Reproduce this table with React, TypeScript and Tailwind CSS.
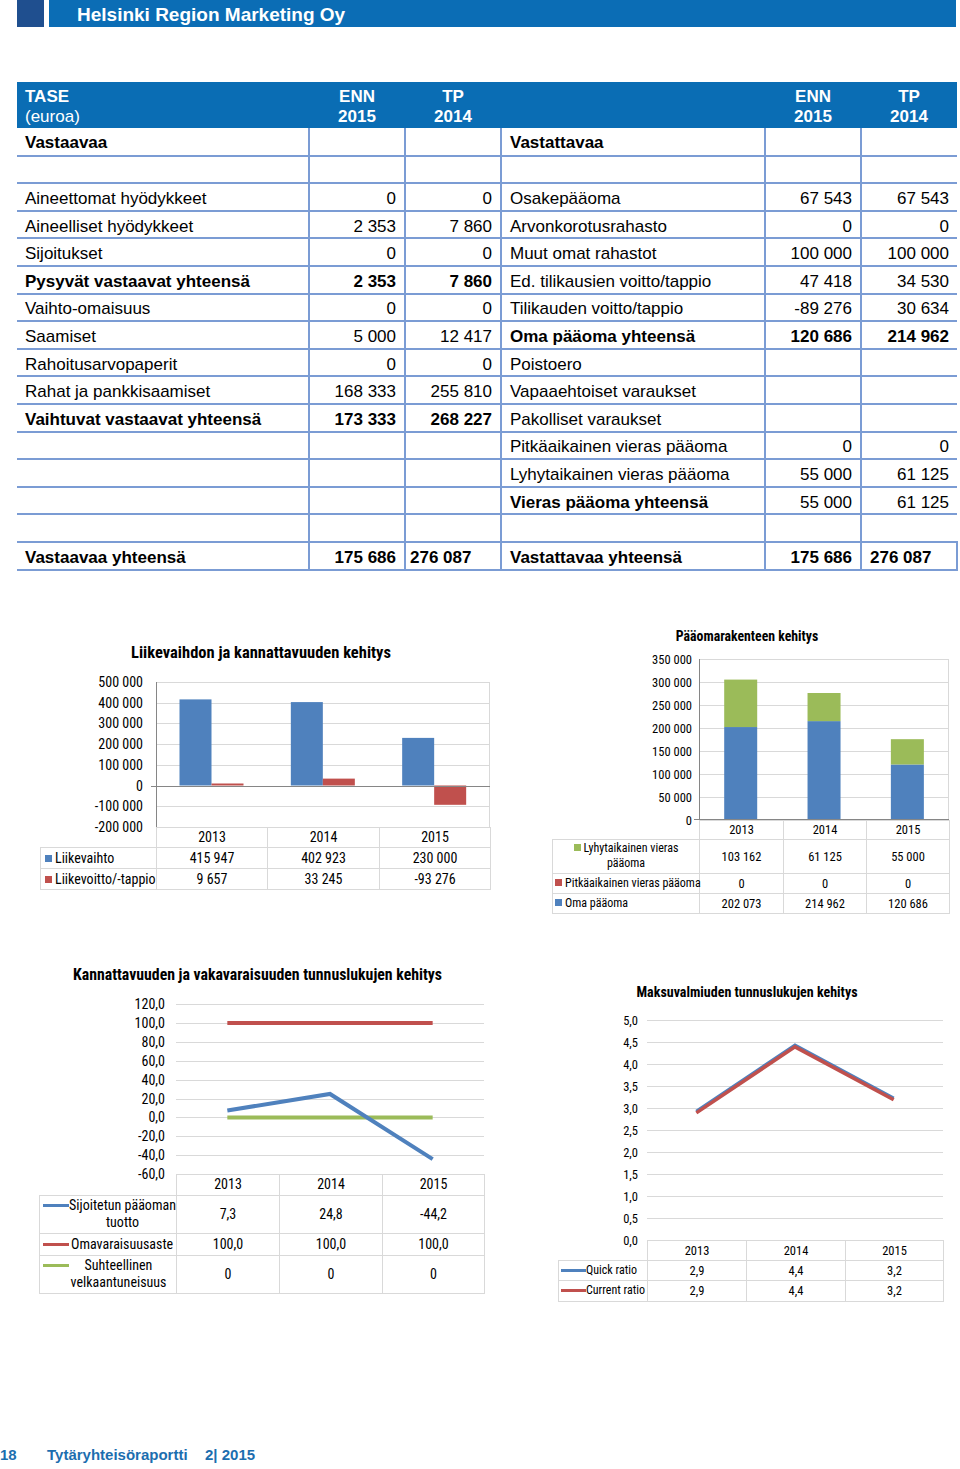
import React from 'react'

const NARROW = "font-['Roboto_Condensed','Noto_Sans',sans-serif] [font-stretch:condensed]"
const BLUE = '#4f81bd'
const RED = '#c0504d'
const GREEN = '#9bbb59'
const GRID = '#d9d9d9'
const AXIS = '#868686'

type TaseRow = {
    l?: string
    l1?: string
    l2?: string
    lb?: boolean
    r?: string
    r1?: string
    r2?: string
    rb?: boolean
    rnb?: boolean
}

const taseRows: TaseRow[] = [
    { l: 'Aineettomat hyödykkeet', l1: '0', l2: '0', r: 'Osakepääoma', r1: '67 543', r2: '67 543' },
    { l: 'Aineelliset hyödykkeet', l1: '2 353', l2: '7 860', r: 'Arvonkorotusrahasto', r1: '0', r2: '0' },
    { l: 'Sijoitukset', l1: '0', l2: '0', r: 'Muut omat rahastot', r1: '100 000', r2: '100 000' },
    { l: 'Pysyvät vastaavat yhteensä', l1: '2 353', l2: '7 860', lb: true, r: 'Ed. tilikausien voitto/tappio', r1: '47 418', r2: '34 530' },
    { l: 'Vaihto-omaisuus', l1: '0', l2: '0', r: 'Tilikauden voitto/tappio', r1: '-89 276', r2: '30 634' },
    { l: 'Saamiset', l1: '5 000', l2: '12 417', r: 'Oma pääoma yhteensä', r1: '120 686', r2: '214 962', rb: true, rnb: true },
    { l: 'Rahoitusarvopaperit', l1: '0', l2: '0', r: 'Poistoero' },
    { l: 'Rahat ja pankkisaamiset', l1: '168 333', l2: '255 810', r: 'Vapaaehtoiset varaukset' },
    { l: 'Vaihtuvat vastaavat yhteensä', l1: '173 333', l2: '268 227', lb: true, r: 'Pakolliset varaukset' },
    { r: 'Pitkäaikainen vieras pääoma', r1: '0', r2: '0' },
    { r: 'Lyhytaikainen vieras pääoma', r1: '55 000', r2: '61 125' },
    { r: 'Vieras pääoma yhteensä', r1: '55 000', r2: '61 125', rb: true },
    {},
]

const td = 'h-[27.6px] border-b-2 border-[#7b9cd4] px-2 pt-[4px] pb-0 align-middle'
const tdl = 'h-[27.6px] border-b-2 border-l-2 border-[#7b9cd4] px-2 pt-[4px] pb-0 align-middle'

function Tase() {
    return (
        <table className="ml-[17px] mt-[55px] w-[940px] table-fixed border-collapse font-['Liberation_Sans',Arial,sans-serif] text-[17px] leading-[20px] text-black">
            <colgroup>
                <col className="w-[292px]" />
                <col className="w-[96px]" />
                <col className="w-[96px]" />
                <col className="w-[264px]" />
                <col className="w-[96px]" />
                <col className="w-[96px]" />
            </colgroup>
            <thead>
                <tr className="h-[46px] bg-[#0a6db4] text-white">
                    <th className="px-2 pt-[4px] text-left font-normal">
                        <div className="font-bold">TASE</div>
                        <div>(euroa)</div>
                    </th>
                    <th className="pt-[4px] text-center font-bold">ENN<br />2015</th>
                    <th className="pt-[4px] text-center font-bold">TP<br />2014</th>
                    <th />
                    <th className="pt-[4px] text-center font-bold">ENN<br />2015</th>
                    <th className="pt-[4px] text-center font-bold">TP<br />2014</th>
                </tr>
            </thead>
            <tbody>
                <tr>
                    <td className={`${td} font-bold`}>Vastaavaa</td>
                    <td className={tdl} />
                    <td className={tdl} />
                    <td className={`${tdl} font-bold`}>Vastattavaa</td>
                    <td className={tdl} />
                    <td className={tdl} />
                </tr>
                <tr>
                    <td className={td} />
                    <td className={tdl} />
                    <td className={tdl} />
                    <td className={tdl} />
                    <td className={tdl} />
                    <td className={tdl} />
                </tr>
                {taseRows.map((row, i) => (
                    <tr key={i}>
                        <td className={`${td} whitespace-nowrap ${row.lb ? 'font-bold' : ''}`}>{row.l}</td>
                        <td className={`${tdl} text-right ${row.lb ? 'font-bold' : ''}`}>{row.l1}</td>
                        <td className={`${tdl} text-right ${row.lb ? 'font-bold' : ''}`}>{row.l2}</td>
                        <td className={`${tdl} whitespace-nowrap ${row.rb ? 'font-bold' : ''}`}>{row.r}</td>
                        <td className={`${tdl} text-right ${row.rnb ? 'font-bold' : ''}`}>{row.r1}</td>
                        <td className={`${tdl} text-right ${row.rnb ? 'font-bold' : ''}`}>{row.r2}</td>
                    </tr>
                ))}
                <tr className="font-bold">
                    <td className={td}>Vastaavaa yhteensä</td>
                    <td className={`${tdl} text-right`}>175 686</td>
                    <td className="h-[27.6px] border-b-2 border-l-2 border-[#7b9cd4] pt-[4px] pb-0 pl-1">276 087</td>
                    <td className={tdl}>Vastattavaa yhteensä</td>
                    <td className={`${tdl} text-right`}>175 686</td>
                    <td className="h-[27.6px] border-x-2 border-b-2 border-[#7b9cd4] pt-[4px] pb-0 pl-2">276 087</td>
                </tr>
            </tbody>
        </table>
    )
}

const cell = 'border border-[#d9d9d9] text-center align-middle p-0'

function Square({ color }: { color: string }) {
    return <span className="mr-[3px] inline-block h-[7px] w-[7px] align-[1px]" style={{ backgroundColor: color }} />
}

function LineMark({ color, w }: { color: string; w: string }) {
    return <span className={`inline-block h-[3px] ${w} shrink-0`} style={{ backgroundColor: color }} />
}

function Chart1() {
    const ticks = [500000, 400000, 300000, 200000, 100000, 0, -100000, -200000]
    const y = (v: number) => 11 + ((500000 - v) * 20.7) / 100000
    const data = [
        [415947, 9657],
        [402923, 33245],
        [230000, -93276],
    ]
    const fmt = (v: number) => (v < 0 ? '-' : '') + Math.abs(v).toLocaleString('en-US').replace(/,/g, ' ')
    return (
        <div className={`ml-[40px] mt-[17px] w-[450px] ${NARROW} text-black`}>
            <div className="h-[18px] whitespace-nowrap pr-[8px] text-center text-[16.5px] font-bold leading-[18px]">
                Liikevaihdon ja kannattavuuden kehitys
            </div>
            <svg width={450} height={156} className="mt-[9px] block overflow-visible">
                {ticks.map((t) => (
                    <line key={t} x1={116} x2={450} y1={Math.round(y(t)) + 0.5} y2={Math.round(y(t)) + 0.5} stroke={GRID} />
                ))}
                <line x1={449.5} x2={449.5} y1={11} y2={156} stroke={GRID} />
                {data.map((d, i) => {
                    const gx = 116 + (334 / 3) * i + 23.5
                    const z = y(0)
                    return (
                        <g key={i}>
                            <rect x={gx} width={32} y={y(d[0])} height={z - y(d[0])} fill={BLUE} />
                            <rect x={gx + 32} width={32} y={Math.min(y(d[1]), z)} height={Math.abs(z - y(d[1]))} fill={RED} />
                        </g>
                    )
                })}
                <line x1={116.5} x2={116.5} y1={11} y2={156} stroke={AXIS} />
                <line x1={111} x2={450} y1={Math.round(y(0)) + 0.5} y2={Math.round(y(0)) + 0.5} stroke={AXIS} />
                {ticks.map((t) => (
                    <text key={t} x={103} y={y(t)} textAnchor="end" dominantBaseline="central" fontSize={14}>
                        {fmt(t)}
                    </text>
                ))}
            </svg>
            <table className="w-[450px] table-fixed border-collapse text-[14px] leading-[16px]">
                <colgroup>
                    <col className="w-[116px]" />
                    <col className="w-[111px]" />
                    <col className="w-[112px]" />
                    <col className="w-[111px]" />
                </colgroup>
                <tbody>
                    <tr className="h-[20px]">
                        <td />
                        <td className={cell}>2013</td>
                        <td className={cell}>2014</td>
                        <td className={cell}>2015</td>
                    </tr>
                    <tr className="h-[21px]">
                        <td className={`${cell} whitespace-nowrap pl-[4px] text-left`}>
                            <Square color={BLUE} />Liikevaihto
                        </td>
                        <td className={cell}>415 947</td>
                        <td className={cell}>402 923</td>
                        <td className={cell}>230 000</td>
                    </tr>
                    <tr className="h-[21px]">
                        <td className={`${cell} whitespace-nowrap pl-[4px] text-left`}>
                            <Square color={RED} />Liikevoitto/-tappio
                        </td>
                        <td className={cell}>9 657</td>
                        <td className={cell}>33 245</td>
                        <td className={cell}>-93 276</td>
                    </tr>
                </tbody>
            </table>
        </div>
    )
}

function Chart2() {
    const ticks = [350000, 300000, 250000, 200000, 150000, 100000, 50000, 0]
    const y = (v: number) => 10 + ((350000 - v) * 161) / 350000
    const data = [
        [202073, 103162],
        [214962, 61125],
        [120686, 55000],
    ]
    const fmt = (v: number) => v.toLocaleString('en-US').replace(/,/g, ' ')
    return (
        <div className={`ml-[62px] w-[397px] ${NARROW} text-black`}>
            <div className="h-[18px] pr-[7px] text-center text-[13.8px] font-bold leading-[18px]">Pääomarakenteen kehitys</div>
            <svg width={397} height={171} className="mt-[4px] block overflow-visible">
                {ticks.map((t) => (
                    <line key={t} x1={147} x2={397} y1={Math.round(y(t)) + 0.5} y2={Math.round(y(t)) + 0.5} stroke={GRID} />
                ))}
                <line x1={396.5} x2={396.5} y1={10} y2={171} stroke={GRID} />
                {data.map((d, i) => {
                    const gx = 147 + (250 / 3) * i + 25.2
                    return (
                        <g key={i}>
                            <rect x={gx} width={33} y={y(d[0])} height={171 - y(d[0])} fill={BLUE} />
                            <rect x={gx} width={33} y={y(d[0] + d[1])} height={y(d[0]) - y(d[0] + d[1])} fill={GREEN} />
                        </g>
                    )
                })}
                <line x1={147.5} x2={147.5} y1={10} y2={171} stroke={AXIS} />
                <line x1={142} x2={397} y1={170.5} y2={170.5} stroke={AXIS} />
                {ticks.map((t) => (
                    <text key={t} x={140} y={y(t)} textAnchor="end" dominantBaseline="central" fontSize={12.5}>
                        {fmt(t)}
                    </text>
                ))}
            </svg>
            <table className="w-[397px] table-fixed border-collapse text-[12.5px] leading-[15px]">
                <colgroup>
                    <col className="w-[147px]" />
                    <col className="w-[84px]" />
                    <col className="w-[83px]" />
                    <col className="w-[83px]" />
                </colgroup>
                <tbody>
                    <tr className="h-[19px]">
                        <td />
                        <td className={cell}>2013</td>
                        <td className={cell}>2014</td>
                        <td className={cell}>2015</td>
                    </tr>
                    <tr className="h-[34px]">
                        <td className={`${cell} px-[2px] text-[12px]`}>
                            <Square color={GREEN} />Lyhytaikainen vieras
                            <br />
                            pääoma
                        </td>
                        <td className={cell}>103 162</td>
                        <td className={cell}>61 125</td>
                        <td className={cell}>55 000</td>
                    </tr>
                    <tr className="h-[20px]">
                        <td className={`${cell} whitespace-nowrap pl-[2px] text-left text-[12px]`}>
                            <Square color={RED} />Pitkäaikainen vieras pääoma
                        </td>
                        <td className={cell}>0</td>
                        <td className={cell}>0</td>
                        <td className={cell}>0</td>
                    </tr>
                    <tr className="h-[20px]">
                        <td className={`${cell} whitespace-nowrap pl-[2px] text-left text-[12px]`}>
                            <Square color={BLUE} />Oma pääoma
                        </td>
                        <td className={cell}>202 073</td>
                        <td className={cell}>214 962</td>
                        <td className={cell}>120 686</td>
                    </tr>
                </tbody>
            </table>
        </div>
    )
}

function Chart3() {
    const ticks = [120, 100, 80, 60, 40, 20, 0, -20, -40, -60]
    const y = (v: number) => 12 + (120 - v) * 0.945
    const xs = [0, 1, 2].map((i) => 137 + (308 / 3) * (i + 0.5))
    const series = [
        { color: RED, vals: [100, 100, 100] },
        { color: GREEN, vals: [0, 0, 0] },
        { color: BLUE, vals: [7.3, 24.8, -44.2] },
    ]
    return (
        <div className={`ml-[39px] w-[445px] ${NARROW} text-black`}>
            <div className="h-[18px] whitespace-nowrap pr-[8px] text-center text-[15.8px] font-bold leading-[18px]">
                Kannattavuuden ja vakavaraisuuden tunnuslukujen kehitys
            </div>
            <svg width={445} height={182} className="mt-[8px] block overflow-visible">
                {ticks.map((t) => (
                    <line key={t} x1={137} x2={445} y1={Math.round(y(t)) + 0.5} y2={Math.round(y(t)) + 0.5} stroke={GRID} />
                ))}
                {series.map((s) => (
                    <polyline
                        key={s.color}
                        points={s.vals.map((v, i) => `${xs[i]},${y(v)}`).join(' ')}
                        fill="none"
                        stroke={s.color}
                        strokeWidth={4}
                    />
                ))}
                {ticks.map((t) => (
                    <text key={t} x={126} y={y(t)} textAnchor="end" dominantBaseline="central" fontSize={14}>
                        {t.toFixed(1).replace('.', ',')}
                    </text>
                ))}
            </svg>
            <table className="w-[445px] table-fixed border-collapse text-[14px] leading-[17px]">
                <colgroup>
                    <col className="w-[137px]" />
                    <col className="w-[103px]" />
                    <col className="w-[103px]" />
                    <col className="w-[102px]" />
                </colgroup>
                <tbody>
                    <tr className="h-[21px]">
                        <td />
                        <td className={cell}>2013</td>
                        <td className={cell}>2014</td>
                        <td className={cell}>2015</td>
                    </tr>
                    <tr className="h-[38px]">
                        <td className={`${cell} pl-[3px]`}>
                            <div className="flex items-start">
                                <LineMark color={BLUE} w="w-[26px] mt-[7px]" />
                                <div className="flex-1 text-center">Sijoitetun pääoman<br />tuotto</div>
                            </div>
                        </td>
                        <td className={cell}>7,3</td>
                        <td className={cell}>24,8</td>
                        <td className={cell}>-44,2</td>
                    </tr>
                    <tr className="h-[22px]">
                        <td className={`${cell} pl-[3px]`}>
                            <div className="flex items-center whitespace-nowrap">
                                <LineMark color={RED} w="w-[26px]" />
                                <span className="pl-[2px]">Omavaraisuusaste</span>
                            </div>
                        </td>
                        <td className={cell}>100,0</td>
                        <td className={cell}>100,0</td>
                        <td className={cell}>100,0</td>
                    </tr>
                    <tr className="h-[38px]">
                        <td className={`${cell} pl-[3px]`}>
                            <div className="flex items-start">
                                <LineMark color={GREEN} w="w-[26px] mt-[7px]" />
                                <div className="flex-1 pr-[8px] text-center">Suhteellinen<br />velkaantuneisuus</div>
                            </div>
                        </td>
                        <td className={cell}>0</td>
                        <td className={cell}>0</td>
                        <td className={cell}>0</td>
                    </tr>
                </tbody>
            </table>
        </div>
    )
}

function Chart4() {
    const ticks = [5, 4.5, 4, 3.5, 3, 2.5, 2, 1.5, 1, 0.5, 0]
    const y = (v: number) => 11 + (5 - v) * 44
    const xs = [0, 1, 2].map((i) => 89 + (296 / 3) * (i + 0.5))
    const vals = [2.9, 4.4, 3.2]
    return (
        <div className={`ml-[74px] mt-[17px] w-[385px] ${NARROW} text-black`}>
            <div className="h-[18px] whitespace-nowrap pr-[7px] text-center text-[14px] font-bold leading-[18px]">
                Maksuvalmiuden tunnuslukujen kehitys
            </div>
            <svg width={385} height={231} className="mt-[8px] block overflow-visible">
                {ticks.map((t) => (
                    <line key={t} x1={89} x2={385} y1={Math.round(y(t)) + 0.5} y2={Math.round(y(t)) + 0.5} stroke={GRID} />
                ))}
                <polyline points={vals.map((v, i) => `${xs[i]},${y(v) - 1}`).join(' ')} fill="none" stroke={BLUE} strokeWidth={3.5} />
                <polyline points={vals.map((v, i) => `${xs[i]},${y(v) + 0.5}`).join(' ')} fill="none" stroke={RED} strokeWidth={3.5} />
                {ticks.map((t) => (
                    <text key={t} x={80} y={y(t)} textAnchor="end" dominantBaseline="central" fontSize={12.5}>
                        {t.toFixed(1).replace('.', ',')}
                    </text>
                ))}
            </svg>
            <table className="w-[385px] table-fixed border-collapse text-[12.5px] leading-[15px]">
                <colgroup>
                    <col className="w-[89px]" />
                    <col className="w-[99px]" />
                    <col className="w-[99px]" />
                    <col className="w-[98px]" />
                </colgroup>
                <tbody>
                    <tr className="h-[20px]">
                        <td />
                        <td className={cell}>2013</td>
                        <td className={cell}>2014</td>
                        <td className={cell}>2015</td>
                    </tr>
                    <tr className="h-[20px]">
                        <td className={`${cell} pl-[2px] text-[12px]`}>
                            <div className="flex items-center whitespace-nowrap">
                                <LineMark color={BLUE} w="w-[25px]" />
                                <span>Quick ratio</span>
                            </div>
                        </td>
                        <td className={cell}>2,9</td>
                        <td className={cell}>4,4</td>
                        <td className={cell}>3,2</td>
                    </tr>
                    <tr className="h-[21px]">
                        <td className={`${cell} pl-[2px] text-[12px]`}>
                            <div className="flex items-center whitespace-nowrap">
                                <LineMark color={RED} w="w-[25px]" />
                                <span>Current ratio</span>
                            </div>
                        </td>
                        <td className={cell}>2,9</td>
                        <td className={cell}>4,4</td>
                        <td className={cell}>3,2</td>
                    </tr>
                </tbody>
            </table>
        </div>
    )
}

export default function App() {
    return (
        <div className="flex h-[1469px] w-[960px] flex-col bg-white font-['Liberation_Sans',Arial,sans-serif]">
            {/* Title bar */}
            <div className="flex h-[27px]">
                <div className="ml-[17px] w-[27px] bg-[#1f4f8f]" />
                <div className="ml-[5px] flex w-[907px] items-center bg-[#0b6db5] pl-[28px] pt-[3px] text-[19px] font-bold text-white">
                    Helsinki Region Marketing Oy
                </div>
            </div>

            <Tase />

            {/* Charts */}
            <div className="mt-[56px] flex items-start">
                <Chart1 />
                <Chart2 />
            </div>
            <div className="mt-[52px] flex items-start">
                <Chart3 />
                <Chart4 />
            </div>

            {/* Footer */}
            <div className="mt-auto mb-[5px] flex h-[18px] items-center text-[15px] font-bold text-[#1c6eaf]">
                <span className="w-[47px]">18</span>
                <span className="w-[158px]">Tytäryhteisöraportti</span>
                <span>2| 2015</span>
            </div>
        </div>
    )
}
